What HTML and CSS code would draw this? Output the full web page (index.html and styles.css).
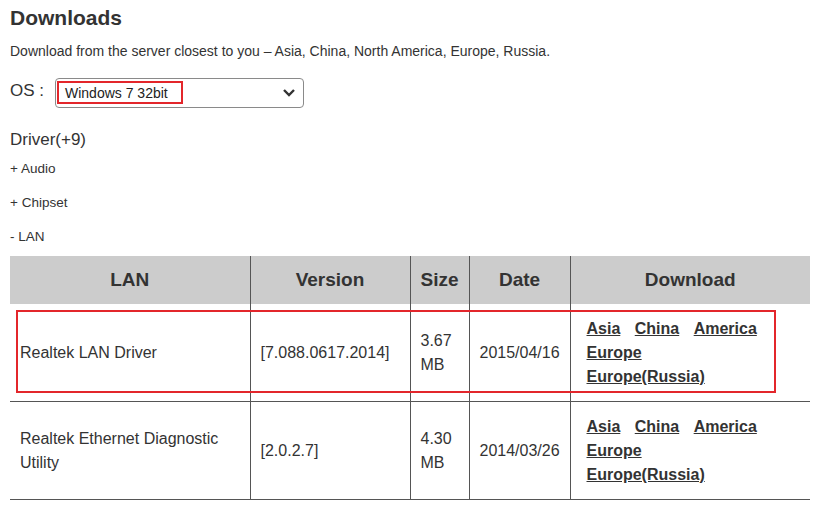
FILE: index.html
```html
<!DOCTYPE html>
<html>
<head>
<meta charset="utf-8">
<link rel="stylesheet" href="styles.css">
</head>
<body>
<div class="page">
  <h1 class="title">Downloads</h1>
  <p class="desc">Download from the server closest to you – Asia, China, North America, Europe, Russia.</p>
  <div class="os-row">
    <span class="os-label">OS :</span>
    <div class="select">
      <span class="select-text">Windows 7 32bit</span>
      <svg class="chevron" width="14" height="10" viewBox="0 0 14 10"><path d="M2 2 L7 7 L12 2" fill="none" stroke="#333" stroke-width="2.4"/></svg>
      <span class="mark mark-select"></span>
    </div>
  </div>
  <div class="driver">Driver(+9)</div>
  <div class="cat">+ Audio</div>
  <div class="cat">+ Chipset</div>
  <div class="cat">- LAN</div>
  <div class="table-wrap">
    <table class="dl">
      <colgroup>
        <col class="c1"><col class="c2"><col class="c3"><col class="c4"><col class="c5">
      </colgroup>
      <thead>
        <tr><th>LAN</th><th>Version</th><th>Size</th><th>Date</th><th>Download</th></tr>
      </thead>
      <tbody>
        <tr>
          <td>Realtek LAN Driver</td>
          <td>[7.088.0617.2014]</td>
          <td>3.67<br>MB</td>
          <td>2015/04/16</td>
          <td class="links"><a href="#">Asia</a> <a href="#">China</a> <a href="#">America</a><br><a href="#">Europe</a><br><a href="#">Europe(Russia)</a></td>
        </tr>
        <tr>
          <td>Realtek Ethernet Diagnostic Utility</td>
          <td>[2.0.2.7]</td>
          <td>4.30<br>MB</td>
          <td>2014/03/26</td>
          <td class="links"><a href="#">Asia</a> <a href="#">China</a> <a href="#">America</a><br><a href="#">Europe</a><br><a href="#">Europe(Russia)</a></td>
        </tr>
      </tbody>
    </table>
    <span class="mark mark-row"></span>
  </div>
</div>
</body>
</html>
```

FILE: styles.css
```css
html, body {
  margin: 0;
  padding: 0;
  background: #fff;
}
body {
  font-family: "Liberation Sans", Arial, sans-serif;
  color: #333;
}
.page {
  padding: 6px 10px 0 10px;
}
.title {
  margin: 0;
  font-size: 21px;
  line-height: 24px;
  font-weight: bold;
  color: #333;
}
.desc {
  margin: 12px 0 0;
  font-size: 14px;
  line-height: 18px;
}
.os-row {
  margin-top: 18px;
  display: flex;
  align-items: center;
  height: 30px;
}
.os-label {
  font-size: 17px;
  width: 45px;
  position: relative;
  top: -2px;
}
.select {
  position: relative;
  width: 249px;
  height: 30px;
  box-sizing: border-box;
  border: 1px solid #8a8a8a;
  border-radius: 4px;
  display: flex;
  align-items: center;
  justify-content: space-between;
  padding: 0 7px 0 9px;
}
.select-text {
  font-size: 14px;
  color: #222;
}
.chevron {
  display: block;
}
.mark {
  position: absolute;
  border: 2px solid #e3262b;
  box-sizing: border-box;
  pointer-events: none;
}
.mark-select {
  left: 1px;
  top: 2px;
  width: 126px;
  height: 23px;
}
.driver {
  margin-top: 22px;
  margin-bottom: 2px;
  font-size: 17px;
  line-height: 20px;
}
.cat {
  font-size: 13.5px;
  line-height: 34px;
}
.table-wrap {
  position: relative;
  margin-top: 2px;
  width: 800px;
}
.dl {
  width: 800px;
  border-collapse: collapse;
  table-layout: fixed;
}
.c1 { width: 240px; }
.c2 { width: 160px; }
.c3 { width: 59px; }
.c4 { width: 101px; }
.c5 { width: 240px; }
.dl th {
  background: #cccccc;
  height: 48px;
  padding: 0;
  font-size: 19px;
  font-weight: bold;
  color: #333;
  text-align: center;
  border-left: 1px solid #555;
}
.dl td {
  font-size: 16px;
  line-height: 24px;
  padding: 13px 10px 12px;
  vertical-align: middle;
  border-left: 1px solid #555;
  border-bottom: 1px solid #555;
  color: #333;
}
.dl th:first-child, .dl td:first-child {
  border-left: none;
}
.dl td.links {
  padding-left: 11px;
}
.links a {
  color: #333;
  font-weight: bold;
  text-decoration: underline;
  margin: 0 5px;
}
.mark-row {
  left: 6px;
  top: 54px;
  width: 760px;
  height: 83px;
}
```
